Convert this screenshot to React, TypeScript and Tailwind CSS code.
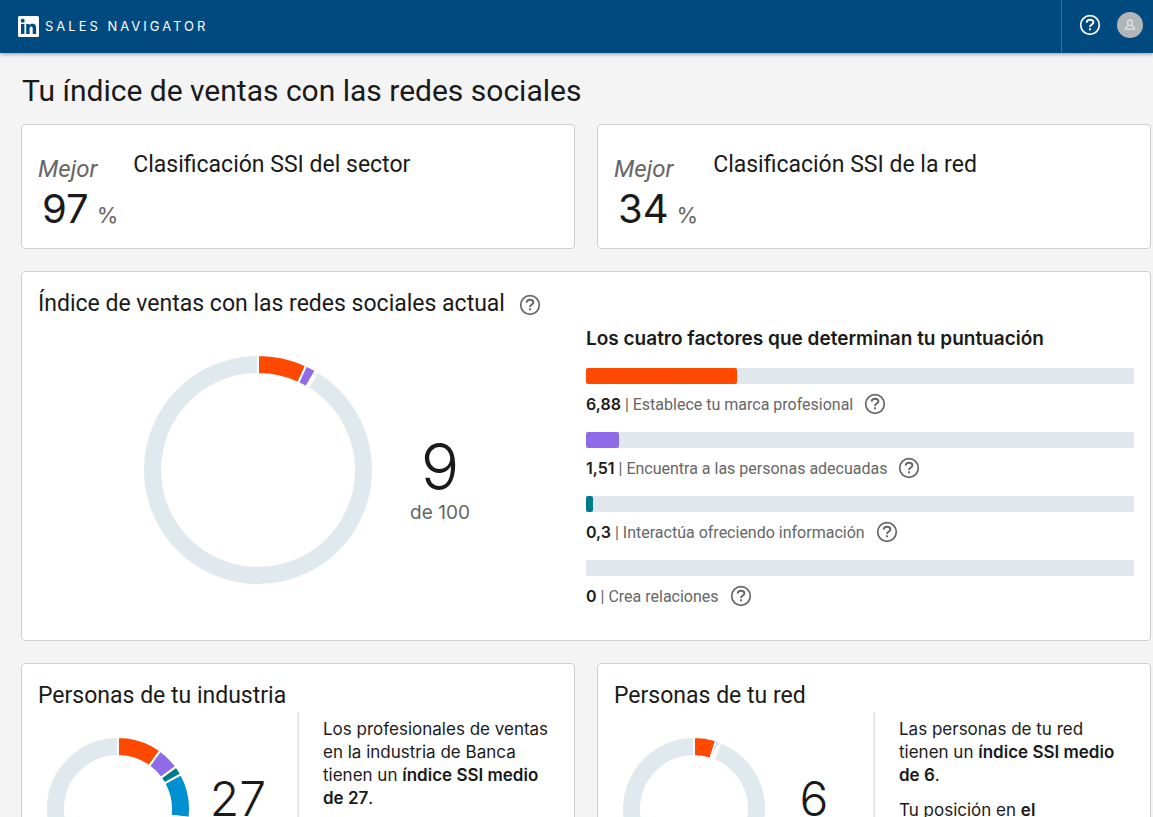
import type { ReactNode } from 'react';

interface Segment {
  value: number;
  color: string;
}

const ORANGE = '#ff4800';
const PURPLE = '#8f6be8';
const TEAL = '#007b8c';
const BLUE = '#008fd0';
const TRACK = '#e0e9ed';

const FACTORS = [
  { score: 6.88, text: '6,88', label: 'Establece tu marca profesional', bar: 'bg-[#ff4800]' },
  { score: 1.51, text: '1,51', label: 'Encuentra a las personas adecuadas', bar: 'bg-[#8f6be8]' },
  { score: 0.3, text: '0,3', label: 'Interactúa ofreciendo información', bar: 'bg-[#007b8c]' },
  { score: 0, text: '0', label: 'Crea relaciones', bar: 'bg-[#008fd0]' },
];

const arcPath = (from: number, to: number, outer: number, inner: number) => {
  const point = (percent: number, r: number) => {
    const angle = (percent / 100) * 2 * Math.PI;
    return `${(r * Math.sin(angle)).toFixed(2)} ${(-r * Math.cos(angle)).toFixed(2)}`;
  };
  const large = to - from > 50 ? 1 : 0;
  return [
    `M${point(from, outer)}`,
    `A${outer} ${outer} 0 ${large} 1 ${point(to, outer)}`,
    `L${point(to, inner)}`,
    `A${inner} ${inner} 0 ${large} 0 ${point(from, inner)}Z`,
  ].join(' ');
};

function Donut({ segments, radius, className }: { segments: Segment[]; radius: number; className: string }) {
  let start = 0;
  const total = segments.reduce((sum, s) => sum + s.value, 0);
  const arcs = [...segments, { value: 100 - total, color: TRACK }].map((s) => {
    const arc = { d: arcPath(start, start + s.value, radius, radius - 19), color: s.color };
    start += s.value;
    return arc;
  });

  return (
    <svg viewBox={`${-radius} ${-radius} ${radius * 2} ${radius * 2}`} className={className} aria-hidden="true">
      {arcs.map((arc) => (
        <path key={arc.d} d={arc.d} fill={arc.color} stroke="#fff" strokeWidth="2" />
      ))}
    </svg>
  );
}

function HelpIcon({ className }: { className: string }) {
  return (
    <svg viewBox="0 0 22 22" className={className} fill="none" stroke="currentColor" strokeWidth="1.9" aria-hidden="true">
      <circle cx="11" cy="11" r="9.3" strokeWidth="1.7" />
      <path d="M7.6 8.6c.1-1.8 1.4-2.9 3.4-2.9s3.4 1.1 3.4 2.7c0 2.2-3.4 2.1-3.4 4.7" />
      <path d="M10 14.3h2v2h-2z" fill="currentColor" stroke="none" />
    </svg>
  );
}

function HelpButton({ label }: { label: string }) {
  return (
    <button type="button" aria-label={label} className="mt-px shrink-0 text-[#666]">
      <HelpIcon className="size-[22px]" />
    </button>
  );
}

function Card({ children, className = '' }: { children: ReactNode; className?: string }) {
  return <section className={`rounded-sm border border-[#cfcfcf] bg-white px-4 ${className}`}>{children}</section>;
}

function RankCard({ value, title }: { value: number; title: string }) {
  return (
    <Card className="flex gap-[15px] pt-6 pb-[9px]">
      <div>
        <p className="pt-1 font-['Roboto',sans-serif] text-2xl leading-8 text-[#666] italic">Mejor</p>
        <p className="flex items-baseline gap-2 pl-1 leading-12">
          <span className="text-[40px]">{value}</span>
          <span className="text-[22px] text-[#666]">%</span>
        </p>
      </div>
      <h2 className="font-['Roboto',sans-serif] text-[23px] leading-8">{title}</h2>
    </Card>
  );
}

function PeopleCard({
  title,
  score,
  segments,
  children,
}: {
  title: string;
  score: number;
  segments: Segment[];
  children: ReactNode;
}) {
  return (
    <Card className="pt-4 pb-6">
      <h2 className="font-['Roboto',sans-serif] text-[23px] leading-8">{title}</h2>
      <div className="flex">
        <div className="flex flex-1 border-r-2 border-[#e9e9e9] pt-[25px] pl-2">
          <Donut segments={segments} radius={72} className="size-36 shrink-0" />
          <div className="w-24 pt-[34px] text-center">
            <p className="text-[48px] leading-14 font-light">{score}</p>
            <p className="text-base text-[#666]">de 100</p>
          </div>
        </div>
        <div className="w-[259px] space-y-3 pt-[6px] pl-6 text-[17px] leading-[23px]">{children}</div>
      </div>
    </Card>
  );
}

export default function App() {
  return (
    <div className="min-h-screen bg-[#f4f4f4] font-['Inter',sans-serif] text-[#1a1a1a]">
      {/* Header */}
      <header className="flex h-[53px] items-stretch justify-between bg-[#004a7f] text-white shadow-[0_1px_4px_rgba(0,0,0,0.4)]">
        <a href="#" className="flex items-center gap-[6px] pl-[18px]">
          <svg viewBox="0 0 21 21" className="size-[21px]" aria-hidden="true">
            <rect width="21" height="21" rx="1.5" fill="#fff" />
            <g fill="#004a7f">
              <circle cx="4.7" cy="4.7" r="2" />
              <path d="M3 8h3.400v10H3zM8.200 8h3.200v1.400c.5-.9 1.500-1.600 3-1.600 3 0 3.700 1.900 3.700 4.600V18h-3.400v-5c0-1.300-.1-2.400-1.500-2.400s-1.600 1.100-1.600 2.400v5H8.200z" />
            </g>
          </svg>
          <span className="text-[13px] tracking-[3px]">SALES NAVIGATOR</span>
        </a>
        <div className="flex items-center gap-4 border-l border-[#336e99] pr-[10px] pb-1 pl-[17px]">
          <button type="button" aria-label="Ayuda">
            <HelpIcon className="size-[22px]" />
          </button>
          <button type="button" aria-label="Tu perfil" className="rounded-full bg-[#b3b6b9]">
            <svg viewBox="0 0 26 26" className="size-[26px]" fill="none" stroke="#dcdee0" strokeWidth="1.5" aria-hidden="true">
              <path d="M13 8c-1.500 0-2.300 1-2.300 2.500 0 1.700.8 3.300 2.300 3.300s2.300-1.600 2.300-3.300C15.300 9 14.500 8 13 8z" />
              <path d="M11.200 13.600c-2 .7-2.800 1.400-2.800 3.600h9.200c0-2.200-.8-2.900-2.800-3.600" />
            </svg>
          </button>
        </div>
      </header>

      <main className="pt-4 pr-[2px] pb-6 pl-[21px]">
        <h1 className="pb-[11px] pl-px font-['Roboto',sans-serif] text-[30px] leading-[44px]">
          Tu índice de ventas con las redes sociales
        </h1>

        <div className="grid grid-cols-2 gap-[22px]">
          <RankCard value={97} title="Clasificación SSI del sector" />
          <RankCard value={34} title="Clasificación SSI de la red" />

          {/* Current index */}
          <Card className="col-span-2 pt-4 pb-4">
            <div className="flex items-center gap-[14px]">
              <h2 className="font-['Roboto',sans-serif] text-[23px] leading-8">
                Índice de ventas con las redes sociales actual
              </h2>
              <HelpButton label="Qué es el índice de ventas" />
            </div>
            <div className="grid grid-cols-2">
              <div className="flex gap-6 pt-[35px] pl-[105px]">
                <Donut
                  radius={115}
                  className="size-[230px] shrink-0"
                  segments={[
                    { value: 6.88, color: ORANGE },
                    { value: 1.51, color: PURPLE },
                    { value: 0.3, color: TEAL },
                  ]}
                />
                <div className="w-[86px] pt-20 text-center">
                  <p className="text-[64px] leading-[64px] font-light">9</p>
                  <p className="text-[19px] leading-7 text-[#666]">de 100</p>
                </div>
              </div>
              <div>
                <h3 className="pt-[5px] pb-[15px] text-[19px] leading-7 font-semibold">
                  Los cuatro factores que determinan tu puntuación
                </h3>
                <ul>
                  {FACTORS.map((factor) => (
                    <li key={factor.label} className="h-16">
                      <div className="h-4 rounded-xs bg-[#e0e8ed]">
                        <div className={`h-4 rounded-xs ${factor.bar}`} style={{ width: `${(factor.score / 25) * 100}%` }} />
                      </div>
                      <div className="flex items-start gap-[11px] pt-2">
                        <p className="font-['Roboto',sans-serif] text-base leading-6 text-[#666]">
                          <span className="font-['Inter',sans-serif] font-semibold text-[#1a1a1a]">{factor.text}</span>
                          {' | '}
                          {factor.label}
                        </p>
                        <HelpButton label={`Más sobre: ${factor.label}`} />
                      </div>
                    </li>
                  ))}
                </ul>
              </div>
            </div>
          </Card>

          <PeopleCard
            title="Personas de tu industria"
            score={27}
            segments={[
              { value: 10, color: ORANGE },
              { value: 5, color: PURPLE },
              { value: 2, color: TEAL },
              { value: 10, color: BLUE },
            ]}
          >
            <p>
              Los profesionales de ventas en la industria de Banca tienen un{' '}
              <strong className="font-semibold">índice SSI medio de 27</strong>.
            </p>
          </PeopleCard>
          <PeopleCard
            title="Personas de tu red"
            score={6}
            segments={[
              { value: 5, color: ORANGE },
              { value: 0.6, color: PURPLE },
              { value: 0.5, color: TEAL },
            ]}
          >
            <p>
              Las personas de tu red tienen un <strong className="font-semibold">índice SSI medio de 6</strong>.
            </p>
            <p>
              Tu posición en <strong className="font-semibold">el</strong>
            </p>
          </PeopleCard>
        </div>
      </main>
    </div>
  );
}
